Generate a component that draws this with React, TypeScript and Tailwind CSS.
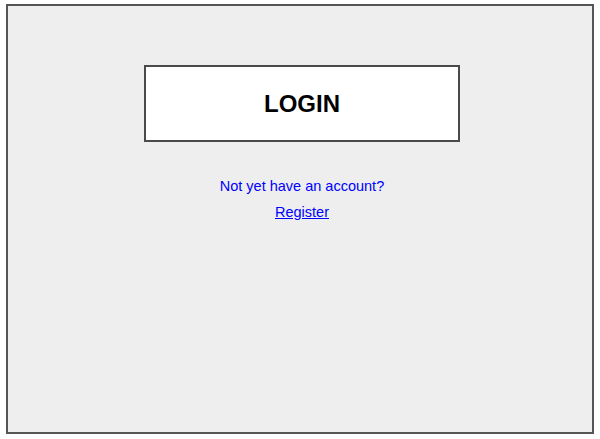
import React from "react";

export default function App() {
  return (
    <div className="w-[600px] h-[439px] bg-white pt-[4px] pl-[6px] font-['Liberation_Sans',Arial,sans-serif]">
      {/* outer frame */}
      <div className="w-[588px] h-[430px] border-2 border-[#555555] bg-[#eeeeee] flex flex-col items-center pt-[59px]">
        {/* login box */}
        <button className="w-[316px] h-[77px] ml-[4px] bg-white border-2 border-[#4a4a4a] flex items-center justify-center">
          <span className="text-[24px] font-bold text-black leading-none">LOGIN</span>
        </button>

        <div className="mt-[34px] ml-[4px] flex flex-col items-center gap-[6px] text-[14.5px] leading-[20px] text-[#0000ff]">
          <p>Not yet have an account?</p>
          <a href="#" className="underline">
            Register
          </a>
        </div>
      </div>
    </div>
  );
}
